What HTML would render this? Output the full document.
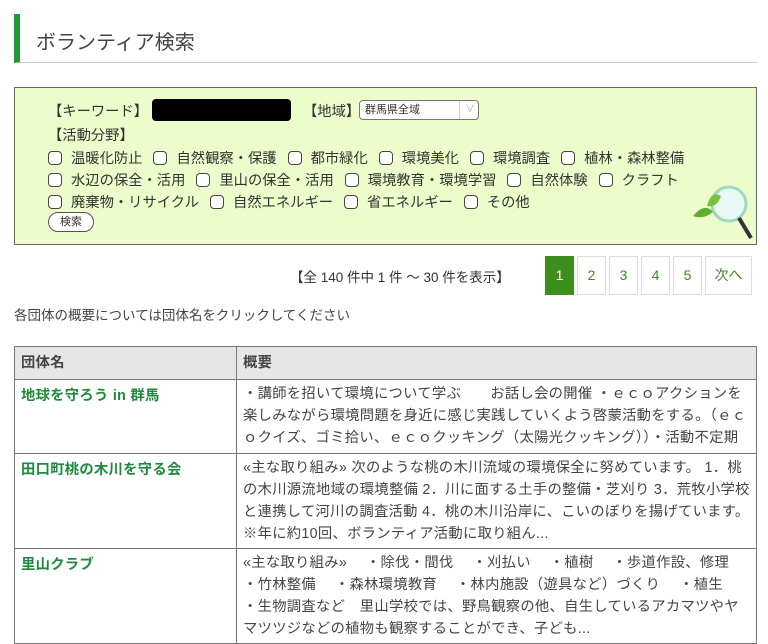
<!DOCTYPE html>
<html><head><meta charset="utf-8"><style>
*{box-sizing:border-box;margin:0;padding:0}
body{width:768px;height:644px;overflow:hidden;background:#fff;font-family:"Liberation Sans","Noto Sans CJK JP",sans-serif;color:#333;font-size:13.5px;position:relative}
.a{position:absolute;white-space:nowrap}
.title{left:14px;top:14px;width:743px;height:49px;border-left:6px solid #1f9a3a;border-bottom:1px solid #ccc}
.title span{position:absolute;left:16px;top:12px;font-size:20px;color:#444}
.box{left:14px;top:87px;width:743px;height:158px;background:#edfccb;border:1px solid #666}
.cb{display:inline-block;width:14px;height:14px;border:1px solid #444;border-radius:4px;background:#fff;vertical-align:-2px;margin-right:9px}
.row{position:absolute;left:33px;font-size:14.3px;color:#333}
.row span{margin-right:11px}
.pg{top:256px;width:29px;height:39px;border:1px solid #ddd;color:#3a8a2a;text-align:center;line-height:37px;font-size:14px}
table{position:absolute;left:14px;top:346px;width:743px;border-collapse:collapse;font-size:14.3px;letter-spacing:0.3px}
td,th{border:1px solid #777;vertical-align:top;text-align:left;padding:3px 6px 3px 6px;line-height:22px}
th{background:#e6e6e6;font-weight:bold;color:#444;height:32px;padding:5px 6px}
td.n{width:222px;color:#1e8a3c;font-weight:bold;padding-top:5px}
td.d{color:#444}
</style></head><body>
<div class="a title"><span>ボランティア検索</span></div>
<div class="a box">
<div class="row" style="top:12px">【キーワード】</div>
<div class="a" style="left:137px;top:11px;width:139px;height:22px;background:#000;border-radius:4px"></div>
<div class="row" style="left:288px;top:12px">【地域】</div>
<div class="a" style="left:344px;top:12px;width:120px;height:20px;background:#fff;border:1px solid #777;border-radius:4px;font-size:11px;line-height:18px;padding-left:5px">群馬県全域<span style="position:absolute;left:99px;top:0;height:18px;border-left:1px solid #ccc;padding-left:5px;color:#aaa;font-size:10px">∨</span></div>
<div class="row" style="top:36px">【活動分野】</div>
<div class="row" style="top:59px"><span><i class="cb"></i>温暖化防止</span><span><i class="cb"></i>自然観察・保護</span><span><i class="cb"></i>都市緑化</span><span><i class="cb"></i>環境美化</span><span><i class="cb"></i>環境調査</span><span><i class="cb"></i>植林・森林整備</span></div>
<div class="row" style="top:81px"><span><i class="cb"></i>水辺の保全・活用</span><span><i class="cb"></i>里山の保全・活用</span><span><i class="cb"></i>環境教育・環境学習</span><span><i class="cb"></i>自然体験</span><span><i class="cb"></i>クラフト</span></div>
<div class="row" style="top:103px"><span><i class="cb"></i>廃棄物・リサイクル</span><span><i class="cb"></i>自然エネルギー</span><span><i class="cb"></i>省エネルギー</span><span><i class="cb"></i>その他</span></div>
<div class="a" style="left:33px;top:124px;width:46px;height:20px;border:1px solid #555;border-radius:10px;background:#fff;font-size:11px;text-align:center;line-height:18px">検索</div>
<svg class="a" style="left:672px;top:88px" width="70" height="70" viewBox="0 0 70 70"><circle cx="42" cy="28" r="17" fill="#e8f8f4" stroke="#9fd8c0" stroke-width="3"/><path d="M52 42 L64 62" stroke="#333" stroke-width="4"/><path d="M6 40 Q18 26 26 36 Q16 44 6 40Z" fill="#5cb030"/><path d="M20 30 Q24 14 34 20 Q30 32 20 30Z" fill="#7cc040"/></svg>
</div>
<div class="a" style="left:290px;top:266px;font-size:13.5px;color:#333">【全 140 件中 1 件 ～ 30 件を表示】</div>
<div class="a pg" style="left:545px;background:#3e8e1e;color:#fff;border-color:#3e8e1e">1</div>
<div class="a pg" style="left:577px">2</div>
<div class="a pg" style="left:609px">3</div>
<div class="a pg" style="left:641px">4</div>
<div class="a pg" style="left:673px">5</div>
<div class="a pg" style="left:705px;width:47px">次へ</div>
<div class="a" style="left:14px;top:304px;font-size:13.5px;color:#444">各団体の概要については団体名をクリックしてください</div>
<table>
<tr><th>団体名</th><th>概要</th></tr>
<tr style="height:74px"><td class="n">地球を守ろう in 群馬</td><td class="d">・講師を招いて環境について学ぶ　　お話し会の開催 ・ｅｃｏアクションを楽しみながら環境問題を身近に感じ実践していくよう啓蒙活動をする。（ｅｃｏクイズ、ゴミ拾い、ｅｃｏクッキング（太陽光クッキング））・活動不定期</td></tr>
<tr style="height:95px"><td class="n">田口町桃の木川を守る会</td><td class="d">«主な取り組み» 次のような桃の木川流域の環境保全に努めています。 1．桃の木川源流地域の環境整備 2．川に面する土手の整備・芝刈り 3．荒牧小学校と連携して河川の調査活動 4．桃の木川沿岸に、こいのぼりを揚げています。 ※年に約10回、ボランティア活動に取り組ん...</td></tr>
<tr><td class="n">里山クラブ</td><td class="d">«主な取り組み»　 ・除伐・間伐　 ・刈払い　 ・植樹　 ・歩道作設、修理　 ・竹林整備　 ・森林環境教育　 ・林内施設（遊具など）づくり　 ・植生　 ・生物調査など　里山学校では、野鳥観察の他、自生しているアカマツやヤマツツジなどの植物も観察することができ、子ども...</td></tr>
</table>
</body></html>
